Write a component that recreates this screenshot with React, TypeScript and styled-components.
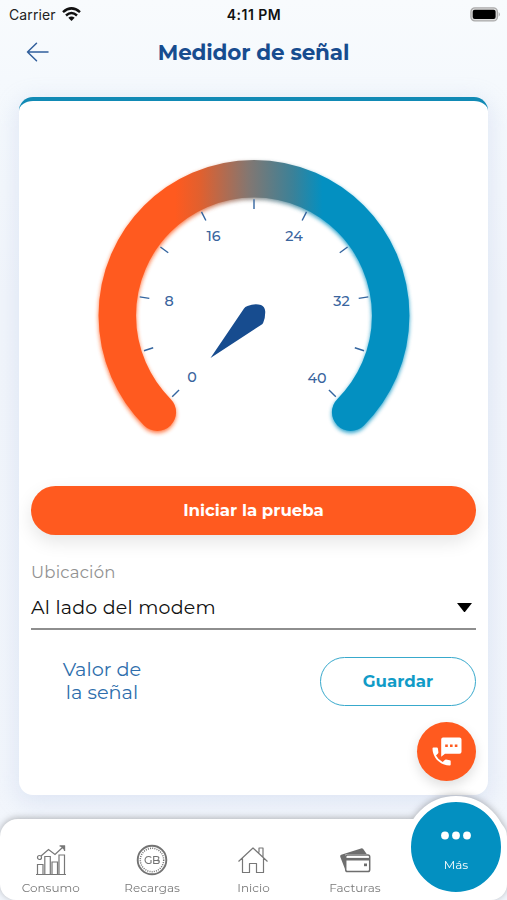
import React from "react";
import styled, { createGlobalStyle } from "styled-components";

const ORANGE = "#ff5a1f";
const BLUE = "#0390c1";
const NAVY = "#174c8f";

const GlobalStyle = createGlobalStyle`
  * { box-sizing: border-box; }
  html, body { margin: 0; padding: 0; }
  body { font-family: Montserrat, Inter, sans-serif; }
  button { font-family: inherit; border: 0; padding: 0; background: none; }
`;

const Screen = styled.div`
  width: 507px;
  height: 900px;
  overflow: hidden;
  display: flex;
  flex-direction: column;
  background: linear-gradient(#f8fbfd 0, #f5f9fd 80px, #f1f5fb 300px, #f2f6fc 100%);
`;

const StatusBar = styled.div`
  height: 28px;
  padding: 0 8px 0 9px;
  display: grid;
  grid-template-columns: 1fr auto 1fr;
  align-items: center;
  font-family: Inter, sans-serif;
  font-size: 14px;
  color: #222;
`;

const Carrier = styled.div`
  display: flex;
  align-items: center;
  gap: 6px;
  letter-spacing: 0.1px;
`;

const Clock = styled.div`
  font-weight: 600;
  font-size: 14px;
  letter-spacing: 0.5px;
  color: #111;
`;

const Battery = styled.svg`
  justify-self: end;
`;

const Header = styled.header`
  height: 69px;
  padding: 0 26px 21px;
  display: grid;
  grid-template-columns: 24px 1fr 24px;
  align-items: center;
`;

const Title = styled.h1`
  margin: 0;
  text-align: center;
  font-size: 21.5px;
  font-weight: 700;
  letter-spacing: -0.15px;
  white-space: nowrap;
  color: ${NAVY};
`;

const Card = styled.main`
  margin: 0 19px;
  height: 698px;
  flex: none;
  padding: 0 12px;
  display: flex;
  flex-direction: column;
  border-top: 4px solid #118ab5;
  border-radius: 14px;
  background: #fff;
  box-shadow: 0 5px 22px 3px rgba(160, 178, 220, 0.23);
`;

const GaugeBox = styled.div`
  height: 385px;
  margin: 0 -12px;
`;

const PrimaryButton = styled.button`
  height: 48.5px;
  flex: none;
  border-radius: 25px;
  background: ${ORANGE};
  color: #fff;
  font-size: 16.6px;
  font-weight: 700;
  box-shadow: 0 7px 18px rgba(0, 0, 0, 0.1);
`;

const Field = styled.div`
  margin-top: 26px;
  height: 69px;
  border-bottom: 2px solid #8e8e8e;
`;

const FieldLabel = styled.div`
  height: 22px;
  line-height: 22px;
  font-size: 16.5px;
  letter-spacing: 0.2px;
  color: #929292;
`;

const FieldValue = styled.div`
  height: 50px;
  padding-right: 4px;
  display: flex;
  align-items: center;
  justify-content: space-between;
  font-size: 19px;
  letter-spacing: 0.24px;
  color: #111;
`;

const ResultRow = styled.div`
  margin-top: 27px;
  display: flex;
  align-items: center;
  justify-content: space-between;
`;

const ResultLabel = styled.div`
  width: 142px;
  text-align: center;
  font-size: 19.3px;
  line-height: 23.5px;
  color: #2e6eac;
`;

const OutlineButton = styled.button`
  width: 156px;
  height: 49.5px;
  border: 1.5px solid #38a9cc;
  border-radius: 25px;
  color: #119bc7;
  font-size: 16.6px;
  font-weight: 700;
`;

const ChatButton = styled.button`
  margin-top: 15.5px;
  align-self: flex-end;
  width: 59px;
  height: 59px;
  border-radius: 50%;
  background: ${ORANGE};
  box-shadow: 0 5px 12px rgba(0, 0, 0, 0.13);
  display: grid;
  place-items: center;
`;

const BottomNav = styled.nav`
  position: relative;
  margin-top: 24px;
  height: 81px;
  flex: none;
  display: grid;
  grid-template-columns: repeat(5, 101.4px);
  border-radius: 18px 18px 16px 16px;
  background: #fff;
  filter: drop-shadow(0 -1px 3.5px rgba(0, 0, 0, 0.28));
`;

const NavItem = styled.div`
  display: flex;
  flex-direction: column;
  align-items: center;
  padding-top: 25px;
  font-size: 12px;
  line-height: 16px;
  color: #7a7a7a;
`;

const NavLabel = styled.span`
  margin-top: 4px;
`;

const MoreButton = styled.div`
  position: absolute;
  left: 405px;
  top: -23px;
  width: 102px;
  height: 102px;
  border: 6px solid #fff;
  border-radius: 50%;
  background: ${BLUE};
  display: flex;
  flex-direction: column;
  align-items: center;
  padding-top: 29px;
  gap: 17px;
  color: #fff;
  font-size: 12px;
  line-height: 16px;
`;

const CX = 234.5;
const CY = 214.5;

const polar = (radius: number, degrees: number) => {
  const a = (degrees * Math.PI) / 180;
  return [CX + radius * Math.sin(a), CY - radius * Math.cos(a)];
};

const arcPath = (() => {
  const [x1, y1] = polar(136.7, -135);
  const [x2, y2] = polar(136.7, 135);
  return `M${x1} ${y1}A136.7 136.7 0 1 1 ${x2} ${y2}`;
})();

const labels = [
  { x: 172.5, y: 281, text: "0" },
  { x: 149.5, y: 205, text: "8" },
  { x: 194, y: 140, text: "16" },
  { x: 274.5, y: 140, text: "24" },
  { x: 322, y: 205, text: "32" },
  { x: 297.5, y: 282, text: "40" },
];

const Gauge = () => (
  <svg width="469" height="385" viewBox="-0.5 0 469 385">
    <defs>
      <linearGradient id="arc" gradientUnits="userSpaceOnUse" x1="156" x2="303" y1="0" y2="0">
        <stop offset="0" stopColor={ORANGE} />
        <stop offset="0.17" stopColor="#e0602f" />
        <stop offset="0.5" stopColor="#827772" />
        <stop offset="0.8" stopColor="#3b8198" />
        <stop offset="1" stopColor={BLUE} />
      </linearGradient>
      <filter id="glow" x="-10%" y="-10%" width="120%" height="120%">
        <feGaussianBlur stdDeviation="2" />
      </filter>
    </defs>
    <g fill="none" stroke="url(#arc)" strokeWidth="37.5" strokeLinecap="round">
      <path d={arcPath} filter="url(#glow)" transform="translate(0 2)" opacity="0.85" />
      <path d={arcPath} />
    </g>
    <g stroke="#34659f" strokeWidth="1.4">
      {Array.from({ length: 11 }, (_, i) => {
        const [x1, y1] = polar(106, -135 + i * 27);
        const [x2, y2] = polar(115.7, -135 + i * 27);
        return <line key={i} x1={x1} y1={y1 - 0.5} x2={x2} y2={y2 - 0.5} />;
      })}
    </g>
    <g fill="#3a659e" fontSize="14.3" fontWeight="500" textAnchor="middle" fontFamily="Montserrat, Inter, sans-serif">
      {labels.map((l) => (
        <text key={l.text} x={l.x} y={l.y}>{l.text}</text>
      ))}
    </g>
    <path
      d="M191 257 L224.5 207.5 Q225.5 205.8 228 205 Q235 202.2 241.5 204 Q245.2 205.5 245.7 210 Q246 216 243.8 221.5 Q243.3 223 241.5 224 Z"
      fill={NAVY}
    />
  </svg>
);

const WifiIcon = () => (
  <svg width="19" height="14" viewBox="0 0 19 14" fill="none" stroke="#111" strokeWidth="2.5">
    <path d="M1 5.1Q9.5-2.4 18 5.1" />
    <path d="M4 8.5Q9.5 3.6 15 8.5" />
    <path d="M9.5 14 6.3 10.8Q9.5 8 12.7 10.8Z" fill="#111" stroke="none" />
  </svg>
);

const BackArrow = () => (
  <svg width="24" height="20" viewBox="0 0 24 20" fill="none" stroke="#315f9c" strokeWidth="1.5" strokeLinecap="round" strokeLinejoin="round">
    <path d="M22 10H1.5M10.5 1.3 1.5 10l9 8.7" />
  </svg>
);

const ChatIcon = () => (
  <svg width="30" height="30" viewBox="0 0 30 30" fill="#fff">
    <path d="M11 1.5h16.5q2 0 2 2v12.2q0 2-2 2H13l-3.8 3V3.5q0-2 1.8-2Z" />
    <path d="M1.5 11.5h3.3q1 0 1.1 1l.5 3.7q.1.7-.4 1.2l-2 2q2.3 4.5 6.7 6.6l2.1-2q.5-.5 1.2-.4l3.7.6q1 .1 1 1v3.2q0 1.100-1 1.100C8 29.500.5 21.500.5 12.500q0-1 1-1Z" />
    <path d="M13.2 8.5h2.6v2.6h-2.6zM18 8.5h2.6v2.6H18zM22.800 8.500h2.600v2.600h-2.600z" fill={ORANGE} />
  </svg>
);

const ChartIcon = () => (
  <svg width="32" height="32" viewBox="0 0 32 32" fill="none" stroke="#777" strokeWidth="1.2">
    <path d="M1 30.5h30M2.500 30V20.500h5.500V30M9.800 30V12.500h5.500V30M17 30V18h5.500v12M24 30V11h5.500v19" />
    <circle cx="4.500" cy="13.500" r="2" />
    <path d="m6 12 7.500-6.500 6.500 5 8-7.500M24.500 2h5v5" />
    <path d="M26 2h3.500v3.500Z" fill="#777" />
  </svg>
);

const CoinIcon = () => (
  <svg width="32" height="32" viewBox="0 0 32 32" fill="none" stroke="#737373">
    <circle cx="16" cy="16" r="14.3" strokeWidth="1.9" />
    <circle cx="16" cy="16" r="11.7" strokeWidth="1.5" strokeDasharray="1 1.2" />
    <text x="16" y="20" textAnchor="middle" fontFamily="Montserrat, Inter, sans-serif" fontSize="11" fontWeight="500" letterSpacing="-0.5" fill="#737373" stroke="none">GB</text>
  </svg>
);

const HouseIcon = () => (
  <svg width="32" height="32" viewBox="0 0 32 32" fill="none" stroke="#777" strokeWidth="1.2" strokeLinejoin="round">
    <path d="M1.500 17.500 16 4l14.500 13.500M5.500 14.500v14h7V19.500h7v9h7v-14M22 8.500V4h4V13" />
  </svg>
);

const CardsIcon = () => (
  <svg width="32" height="32" viewBox="0 0 32 32" fill="none" stroke="#6e6e6e" strokeWidth="1.5" strokeLinejoin="round">
    <path d="M1.200 12.700Q.8 11.200 2.200 10.700L22 4.400q1.300-.4 2.200.6l3.500 5H8Q6 10 6 12V25Z" fill="#6e6e6e" stroke="none" />
    <rect x="6.700" y="11" width="24" height="16.500" rx="1.800" fill="#fff" />
    <path d="M7 15.200h23.500" strokeWidth="2.600" />
    <path d="M25 19.500h3v2.700h-3z" fill="#6e6e6e" stroke="none" />
  </svg>
);

const navItems = [
  { label: "Consumo", icon: <ChartIcon /> },
  { label: "Recargas", icon: <CoinIcon /> },
  { label: "Inicio", icon: <HouseIcon /> },
  { label: "Facturas", icon: <CardsIcon /> },
];

export default function App() {
  return (
    <>
      <GlobalStyle />
      <Screen>
        <StatusBar>
          <Carrier>Carrier <WifiIcon /></Carrier>
          <Clock>4:11 PM</Clock>
          <Battery width="29" height="15" viewBox="0 0 29 15" overflow="visible">
            <rect x="0.9" y="0.9" width="26.5" height="13" rx="4" fill="#ddd" stroke="#aaa" strokeWidth="1.3" />
            <rect x="2.7" y="2.7" width="22.9" height="9.4" rx="2" fill="#000" />
            <path d="M28.7 5q2.4 2.4 0 4.8Z" fill="#aaa" />
          </Battery>
        </StatusBar>
        <Header>
          <BackArrow />
          <Title>Medidor de señal</Title>
        </Header>
        <Card>
          <GaugeBox><Gauge /></GaugeBox>
          <PrimaryButton>Iniciar la prueba</PrimaryButton>
          <Field>
            <FieldLabel>Ubicación</FieldLabel>
            <FieldValue>
              Al lado del modem
              <svg width="15" height="10" viewBox="0 0 15 10"><path d="M0 0h15L8.3 8.600q-.8 1-1.600 0Z" /></svg>
            </FieldValue>
          </Field>
          <ResultRow>
            <ResultLabel>Valor de<br />la señal</ResultLabel>
            <OutlineButton>Guardar</OutlineButton>
          </ResultRow>
          <ChatButton><ChatIcon /></ChatButton>
        </Card>
        <BottomNav>
          {navItems.map((item) => (
            <NavItem key={item.label}>
              {item.icon}
              <NavLabel>{item.label}</NavLabel>
            </NavItem>
          ))}
          <MoreButton>
            <svg width="30" height="9" viewBox="0 0 30 9" fill="#fff">
              <circle cx="4" cy="4.5" r="3.9" />
              <circle cx="15" cy="4.5" r="3.9" />
              <circle cx="26" cy="4.5" r="3.9" />
            </svg>
            Más
          </MoreButton>
        </BottomNav>
      </Screen>
    </>
  );
}
